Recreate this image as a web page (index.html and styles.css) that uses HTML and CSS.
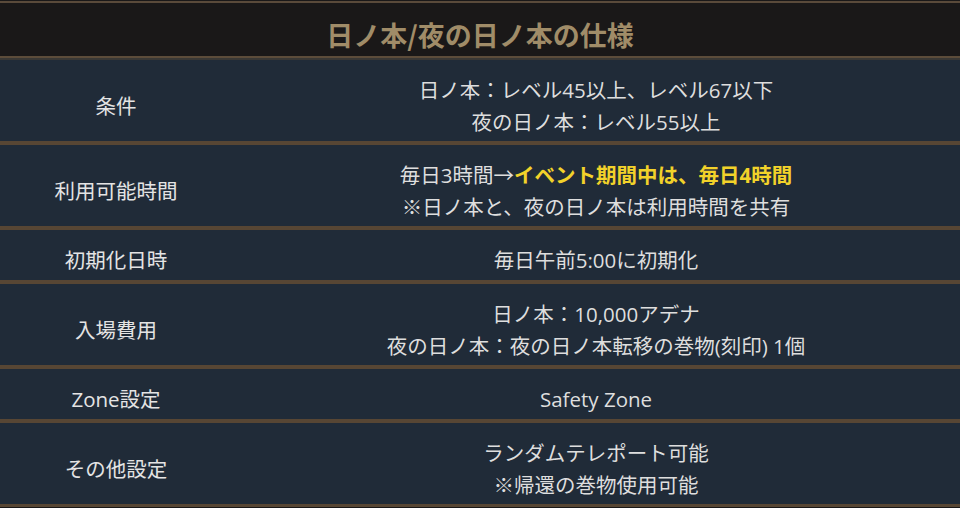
FILE: index.html
```html
<!DOCTYPE html>
<html lang="ja">
<head>
<meta charset="utf-8">
<title>日ノ本/夜の日ノ本の仕様</title>
<link rel="stylesheet" href="styles.css">
</head>
<body>
<div class="spec">
  <div class="spec-head">日ノ本/夜の日ノ本の仕様</div>
  <div class="row">
    <div class="label">条件</div>
    <div class="value">日ノ本：レベル45以上、レベル67以下<br>夜の日ノ本：レベル55以上</div>
  </div>
  <div class="row">
    <div class="label">利用可能時間</div>
    <div class="value">毎日3時間→<span class="hl">イベント期間中は、毎日4時間</span><br>※日ノ本と、夜の日ノ本は利用時間を共有</div>
  </div>
  <div class="row single">
    <div class="label">初期化日時</div>
    <div class="value">毎日午前5:00に初期化</div>
  </div>
  <div class="row">
    <div class="label">入場費用</div>
    <div class="value">日ノ本：10,000アデナ<br>夜の日ノ本：夜の日ノ本転移の巻物(刻印) 1個</div>
  </div>
  <div class="row single">
    <div class="label">Zone設定</div>
    <div class="value">Safety Zone</div>
  </div>
  <div class="row">
    <div class="label">その他設定</div>
    <div class="value">ランダムテレポート可能<br>※帰還の巻物使用可能</div>
  </div>
</div>
</body>
</html>
```

FILE: styles.css
```css
html, body {
  margin: 0;
  padding: 0;
  background: #1a1818;
}
body {
  font-family: "Open Sans", "Noto Sans CJK JP", sans-serif;
  width: 960px;
  height: 508px;
  overflow: hidden;
}
.spec {
  margin-top: 1px;
  border-top: 2px solid #5a4a3a;
  border-bottom: 3px solid #574634;
}
.spec-head {
  display: flex;
  align-items: center;
  justify-content: center;
  padding-top: 9px;
  box-sizing: border-box;
  height: 55px;
  color: #a08c68;
  font-family: "Noto Sans CJK JP", sans-serif;
  font-size: 27px;
  font-weight: 700;
  background: #1a1818;
  border-bottom: 2px solid #5c4c3a;
  box-shadow: 0 2px 0 #3a3835;
  margin-bottom: 2px;
}
.row {
  display: grid;
  grid-template-columns: 232px 1fr;
  background: #202b38;
  color: #dedede;
  font-size: 20.5px;
  line-height: 32px;
}
.row + .row {
  border-top: 4px solid #574634;
}
.label, .value {
  padding: 14px 0 3px;
  text-align: center;
  display: flex;
  flex-direction: column;
  justify-content: center;
}
.row.single .label, .row.single .value {
  padding-bottom: 4px;
}
.value {
  display: block;
}
.label {
  color: #e4e4e4;
}
.hl {
  color: #f2d22a;
  font-weight: 700;
}
```
